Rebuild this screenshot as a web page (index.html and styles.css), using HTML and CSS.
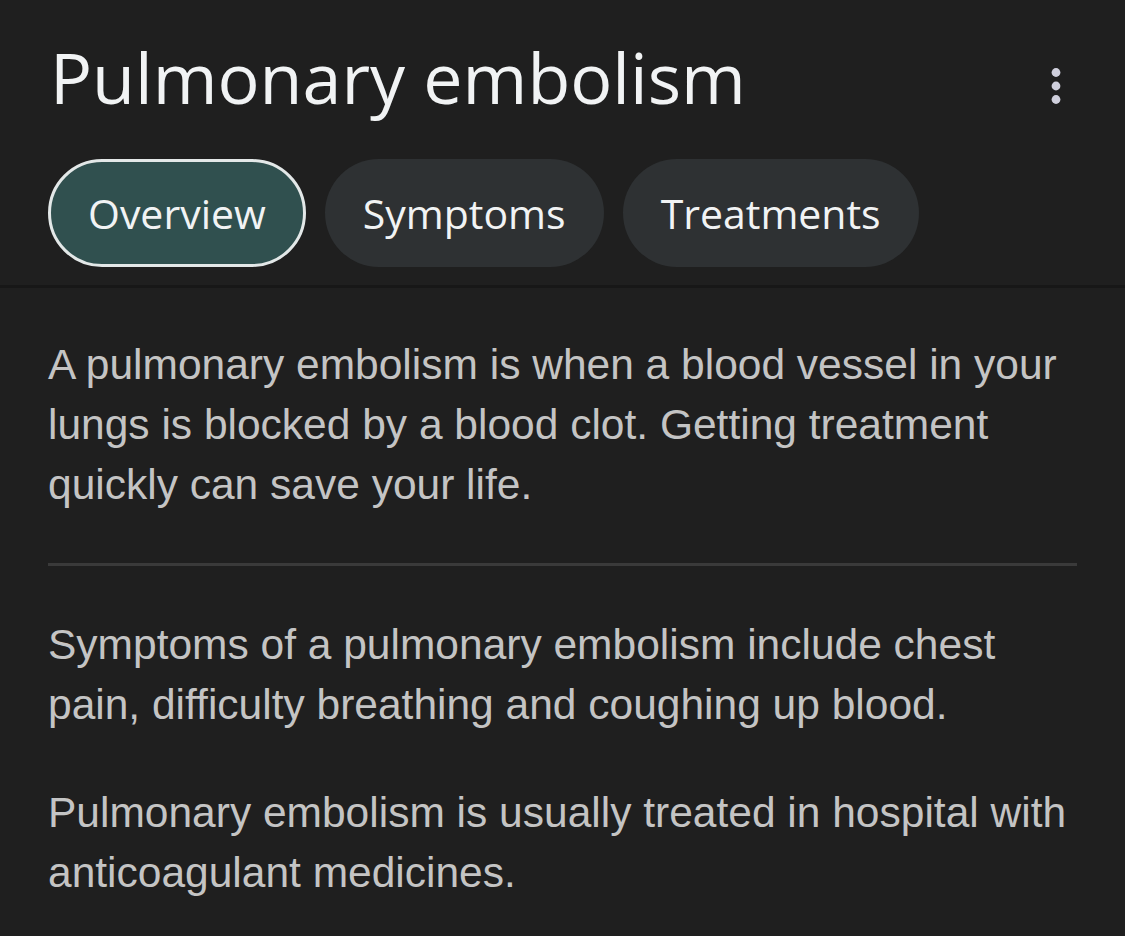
FILE: index.html
```html
<!DOCTYPE html>
<html lang="en">
<head>
<meta charset="utf-8">
<title>Pulmonary embolism</title>
<link rel="stylesheet" href="styles.css">
</head>
<body>
<header class="header">
  <div class="title-row">
    <h1 class="title">Pulmonary embolism</h1>
    <button class="menu" aria-label="More options">
      <svg width="12" height="38" viewBox="0 0 12 38"><circle cx="6" cy="5.5" r="4.4"/><circle cx="6" cy="19" r="4.4"/><circle cx="6" cy="32.5" r="4.4"/></svg>
    </button>
  </div>
  <nav class="tabs">
    <span class="tab tab-active">Overview</span>
    <span class="tab">Symptoms</span>
    <span class="tab">Treatments</span>
  </nav>
</header>
<main class="content">
  <p class="para">A pulmonary embolism is when a blood vessel in your lungs is blocked by a blood clot. Getting treatment quickly can save your life.</p>
  <hr class="divider">
  <p class="para">Symptoms of a pulmonary embolism include chest pain, difficulty breathing and coughing up blood.</p>
  <p class="para">Pulmonary embolism is usually treated in hospital with anticoagulant medicines.</p>
</main>
</body>
</html>
```

FILE: styles.css
```css
html, body {
  margin: 0;
  padding: 0;
  background: #1f1f1f;
}
body {
  width: 1125px;
  height: 936px;
  overflow: hidden;
}
.header {
  border-bottom: 3px solid #171717;
  padding: 0 0 18px 0;
}
.title-row {
  display: flex;
  align-items: flex-start;
  justify-content: space-between;
  padding: 32px 63px 0 50px;
}
.title {
  margin: 0;
  font-family: "Open Sans", Roboto, sans-serif;
  font-weight: 400;
  font-size: 70px;
  line-height: 90px;
  color: #f1f3f4;
  letter-spacing: 0;
}
.menu {
  background: none;
  border: none;
  padding: 0;
  margin-top: 35px;
  display: flex;
  fill: #cfcfdc;
}
.tabs {
  display: flex;
  gap: 19px;
  padding: 37px 0 0 48px;
}
.tab {
  display: flex;
  align-items: center;
  height: 108px;
  box-sizing: border-box;
  padding: 0 38px;
  border-radius: 54px;
  background: #2e3133;
  color: #f1f3f4;
  font-family: "Open Sans", Roboto, sans-serif;
  font-size: 41px;
}
.tab-active {
  background: #30504f;
  border: 3px solid #e3e8e8;
  padding: 0 37px;
}
.content {
  padding: 47px 48px 0 48px;
}
.para {
  margin: 0 0 48px 0;
  font-family: Arial, "Liberation Sans", Helvetica, sans-serif;
  font-size: 42.5px;
  letter-spacing: 0;
  line-height: 60px;
  color: #c4c4c4;
}
.divider {
  border: none;
  height: 3px;
  background: #3a3a3a;
  margin: 0 0 49px 0;
}
```
